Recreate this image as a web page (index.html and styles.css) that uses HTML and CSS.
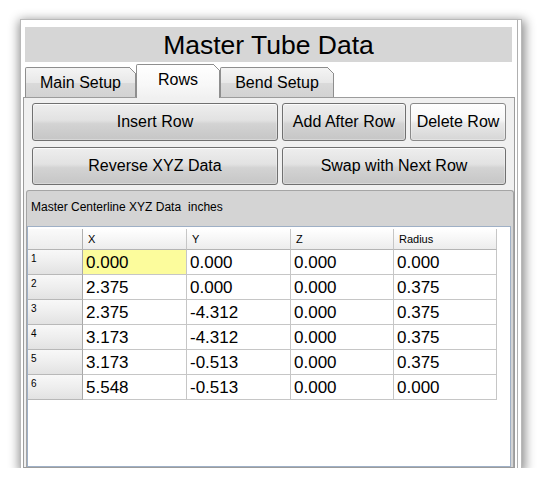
FILE: index.html
```html
<!DOCTYPE html>
<html>
<head>
<meta charset="utf-8">
<title>Master Tube Data</title>
<link rel="stylesheet" href="styles.css">
</head>
<body>
<div class="window">
  <div class="main">
    <div class="titlebar">Master Tube Data</div>
    <div class="tabs">
      <div class="tab tab-main">Main Setup</div>
      <div class="tab tab-rows active">Rows</div>
      <div class="tab tab-bend">Bend Setup</div>
    </div>
    <div class="pane">
      <div class="buttons">
        <button class="btn">Insert Row</button>
        <button class="btn">Add After Row</button>
        <button class="btn hot">Delete Row</button>
        <button class="btn">Reverse XYZ Data</button>
        <button class="btn span2">Swap with Next Row</button>
      </div>
      <div class="group">
        <div class="group-label"><span>Master Centerline XYZ Data</span><span class="units">inches</span></div>
        <div class="grid-wrap">
          <div class="grid">
            <div class="cell corner"></div>
            <div class="cell head">X</div>
            <div class="cell head">Y</div>
            <div class="cell head">Z</div>
            <div class="cell head">Radius</div>

            <div class="cell rowhead">1</div>
            <div class="cell sel">0.000</div>
            <div class="cell">0.000</div>
            <div class="cell">0.000</div>
            <div class="cell">0.000</div>

            <div class="cell rowhead">2</div>
            <div class="cell">2.375</div>
            <div class="cell">0.000</div>
            <div class="cell">0.000</div>
            <div class="cell">0.375</div>

            <div class="cell rowhead">3</div>
            <div class="cell">2.375</div>
            <div class="cell">-4.312</div>
            <div class="cell">0.000</div>
            <div class="cell">0.375</div>

            <div class="cell rowhead">4</div>
            <div class="cell">3.173</div>
            <div class="cell">-4.312</div>
            <div class="cell">0.000</div>
            <div class="cell">0.375</div>

            <div class="cell rowhead">5</div>
            <div class="cell">3.173</div>
            <div class="cell">-0.513</div>
            <div class="cell">0.000</div>
            <div class="cell">0.375</div>

            <div class="cell rowhead">6</div>
            <div class="cell">5.548</div>
            <div class="cell">-0.513</div>
            <div class="cell">0.000</div>
            <div class="cell">0.000</div>
          </div>
        </div>
      </div>
    </div>
  </div>
  <div class="edge"></div>
</div>
</body>
</html>
```

FILE: styles.css
```css
html, body {
  margin: 0;
  background: #ffffff;
  font-family: "Liberation Sans", Arial, sans-serif;
  color: #000;
}

.window {
  box-sizing: border-box;
  margin: 19px 0 0 20px;
  width: 502px;
  height: 449px;
  background: #fff;
  border: 1px solid #b9b9b9;
  border-bottom: none;
  box-shadow: 1px 3px 10px 2px rgba(0, 0, 0, 0.45);
  display: flex;
  overflow: hidden;
}

.main {
  margin-left: 2px;
  width: 492px;
  display: flex;
  flex-direction: column;
  padding-top: 7px;
}

.edge {
  margin-left: 2px;
  width: 0;
  border-left: 1px solid #b0b0b0;
}

.titlebar {
  margin: 0 3px 0 2px;
  height: 35px;
  background: #d6d6d6;
  font-size: 26.5px;
  line-height: 36px;
  text-align: center;
  overflow: hidden;
}

.tabs {
  height: 35px;
  flex: none;
  display: flex;
  align-items: flex-end;
  padding-left: 2px;
  position: relative;
  z-index: 1;
}

.tab {
  box-sizing: border-box;
  height: 30px;
  border: 1px solid #8e8e8e;
  border-bottom: none;
  border-radius: 2px 0 0 0;
  background: linear-gradient(#f4f4f4, #e8e8e8 50%, #dadada 52%, #d2d2d2);
  font-size: 16px;
  display: flex;
  align-items: center;
  justify-content: center;
  position: relative;
}

.tab::after {
  content: "";
  position: absolute;
  top: -1px;
  right: -1px;
  width: 7px;
  height: 7px;
  background: linear-gradient(to top right, transparent 45%, #8e8e8e 45%, #8e8e8e 56%, #fff 56%);
}

.tab-main { width: 111px; }
.tab-rows { width: 84px; }
.tab-bend { width: 114px; }

.tab.active {
  height: 34px;
  margin-bottom: -1px;
  align-items: flex-start;
  padding-top: 6px;
  background: linear-gradient(#ffffff, #f8f8f8 60%, #f0f0f0);
  z-index: 2;
}

.pane {
  flex: 1;
  border: 1px solid #9c9c9c;
  background: #f0f0f0;
  display: flex;
  flex-direction: column;
}

.buttons {
  display: grid;
  grid-template-columns: 246px 124px 96px;
  grid-auto-rows: 38px;
  column-gap: 4px;
  row-gap: 6px;
  padding: 5px 0 0 8px;
}

.btn {
  font-family: "Liberation Sans", Arial, sans-serif;
  font-size: 16px;
  color: #000;
  padding: 0;
  border: 1px solid #707070;
  border-radius: 3px;
  background: linear-gradient(#eeeeee, #e2e2e2 45%, #d3d3d3 55%, #c6c6c6);
  box-shadow: inset 0 1px 0 rgba(255, 255, 255, 0.75), inset 0 0 0 1px rgba(255, 255, 255, 0.3);
}

.btn.hot {
  background: linear-gradient(#ffffff, #f6f6f6 45%, #e8e8e8 55%, #d6d6d6);
  border-color: #8a8a8a;
}

.span2 {
  grid-column: 2 / 4;
}

.group {
  flex: 1;
  margin: 5px 0 0 2px;
  border: 1px solid #a5a5a5;
  border-bottom: none;
  border-radius: 3px 3px 0 0;
  background: #d4d4d4;
  display: flex;
  flex-direction: column;
}

.group-label {
  box-sizing: border-box;
  height: 35px;
  padding: 9px 0 0 4px;
  font-size: 12px;
  line-height: 14px;
}

.units {
  margin-left: 7px;
}

.grid-wrap {
  box-sizing: border-box;
  height: 241px;
  margin-right: 2px;
  border: 1px solid #9fb0c6;
  background: #fff;
  padding-top: 2px;
}

.grid {
  display: grid;
  grid-template-columns: 55px 104px 104px 103px 103px;
  grid-template-rows: 21px repeat(6, 25px);
  width: max-content;
}

.cell {
  box-sizing: border-box;
  border-right: 1px solid #c6c6c6;
  border-bottom: 1px solid #c6c6c6;
  font-size: 17px;
  line-height: 20px;
  padding: 3px 0 0 3px;
  white-space: nowrap;
}

.cell.head,
.cell.corner {
  font-size: 11px;
  line-height: 20px;
  padding: 0 0 0 5px;
  background: linear-gradient(#ffffff, #f6f6f6 50%, #ececec);
  border-bottom-color: #b4b4b4;
}

.cell.corner {
  background: linear-gradient(#fafafa, #ececec);
  border-right-color: #b0b0b0;
}

.cell.rowhead {
  font-size: 10px;
  line-height: 12px;
  padding: 3px 0 0 3px;
  background: linear-gradient(#f8f8f8, #eeeeee 50%, #e2e2e2);
  border-right-color: #a8a8a8;
  border-bottom-color: #b8b8b8;
}

.cell.sel {
  background: #fcfc9c;
}
```
